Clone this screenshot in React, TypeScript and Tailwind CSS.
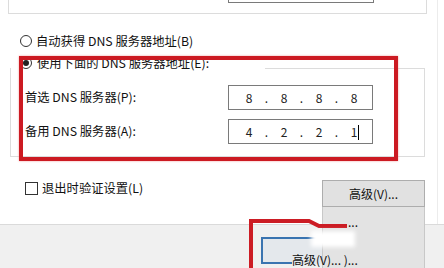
const font = "font-['Segoe_UI','Noto_Sans_CJK_SC','Microsoft_YaHei',sans-serif]";

function Radio({ checked }: { checked?: boolean }) {
  return (
    <span className="flex h-[12px] w-[12px] shrink-0 items-center justify-center rounded-full border border-[#333] bg-white">
      {checked && <span className="h-[6px] w-[6px] rounded-full bg-[#222]" />}
    </span>
  );
}

function IpBox({ parts, cursor }: { parts: string[]; cursor?: boolean }) {
  return (
    <div className="flex h-[25px] w-[145px] items-center border border-[#7a7a7a] bg-white pl-[14px] text-[12px] text-[#222]">
      {parts.map((p, i) => (
        <div key={i} className="flex items-center">
          <span className="relative w-[12px] text-center">
            {p}
            {cursor && i === parts.length - 1 && (
              <span className="absolute right-[1px] top-[-1px] h-[15px] w-px bg-black" />
            )}
          </span>
          {i < parts.length - 1 && <span className="w-[23px] text-center">.</span>}
        </div>
      ))}
    </div>
  );
}

export default function App() {
  return (
    <div className={`relative flex h-[268px] w-[444px] flex-col overflow-hidden bg-[#f0f0f0] text-[12.3px] leading-none text-[#111] ${font}`}>
      <div className="relative h-[225px] border-b border-[#dadada] bg-white">
        {/* top group box remnant */}
        <div className="ml-[8px] h-[14px] w-[419px] border-x border-b border-[#dcdcdc]">
          <div className="ml-[219px] h-[3px] w-[146px] border-x border-b border-[#7a7a7a]" />
        </div>

        <div className="mt-[21px] flex h-[12px] items-center gap-[4px] pl-[20px]">
          <Radio />
          <span>自动获得 DNS 服务器地址(B)</span>
        </div>

        {/* manual DNS group */}
        <div className="relative ml-[10px] mt-[21px] h-[89px] w-[415px] border-x border-b border-[#dcdcdc]">
          <div className="absolute left-[254px] right-0 top-0 border-t border-[#dcdcdc]" />
          <div className="absolute left-[9px] top-[-11px] flex items-center gap-[5px] bg-white pr-[2px]">
            <Radio checked />
            <span>使用下面的 DNS 服务器地址(E):</span>
          </div>
          <div className="flex flex-col gap-[9px] pl-[14px] pt-[17px]">
            <div className="flex items-center">
              <span className="w-[203px]">首选 DNS 服务器(P):</span>
              <IpBox parts={["8", "8", "8", "8"]} />
            </div>
            <div className="flex items-center">
              <span className="w-[203px]">备用 DNS 服务器(A):</span>
              <IpBox parts={["4", "2", "2", "1"]} cursor />
            </div>
          </div>
        </div>

        <div className="mt-[23px] flex items-start pl-[25px] pr-[19px]">
          <div className="mt-[2px] flex items-center gap-[4px]">
            <span className="h-[13px] w-[13px] border border-[#333] bg-white" />
            <span>退出时验证设置(L)</span>
          </div>
          <button className="ml-auto h-[27px] w-[103px] border border-[#adadad] bg-[#e1e1e1] text-[12px]">
            高级(V)...
          </button>
        </div>

        <div className="absolute bottom-0 right-[6px] top-0 border-r border-[#ececec]" />
      </div>

      {/* pasted screenshot fragment */}
      <div className="absolute left-[322px] top-[207px] h-[61px] w-[103px] border-x border-[#c8c8c8] bg-[#e3e3e3]" />
      <div className="absolute left-[262px] top-[237px] h-[27px] w-[60px] bg-[#e4e8ec]" />
      <svg className="absolute left-0 top-0" width="444" height="268">
        <path d="M262 264 L262 238 L321 238" fill="none" stroke="#3a74b0" strokeWidth="2" />
        <path d="M262 263 L292 263" fill="none" stroke="#3a74b0" strokeWidth="2" />
        <path d="M251 270 L251 221 L309 221 L319 226 L347 226" fill="none" stroke="#cc1c24" strokeWidth="4" />
      </svg>
      <div className="absolute left-[311px] top-[231px] h-[16px] w-[44px] bg-white blur-[2px]" />
      <span className="absolute left-[348px] top-[216px] text-[12px]">...</span>
      <span className="absolute left-[292px] top-[254px] text-[12px]">高级(V)... )...</span>

      {/* red annotation */}
      <div className="pointer-events-none absolute left-[19px] top-[56px] h-[105px] w-[379px] border-4 border-[#cc1a22] shadow-[0_0_2px_#f2a0a0]" />
    </div>
  );
}
